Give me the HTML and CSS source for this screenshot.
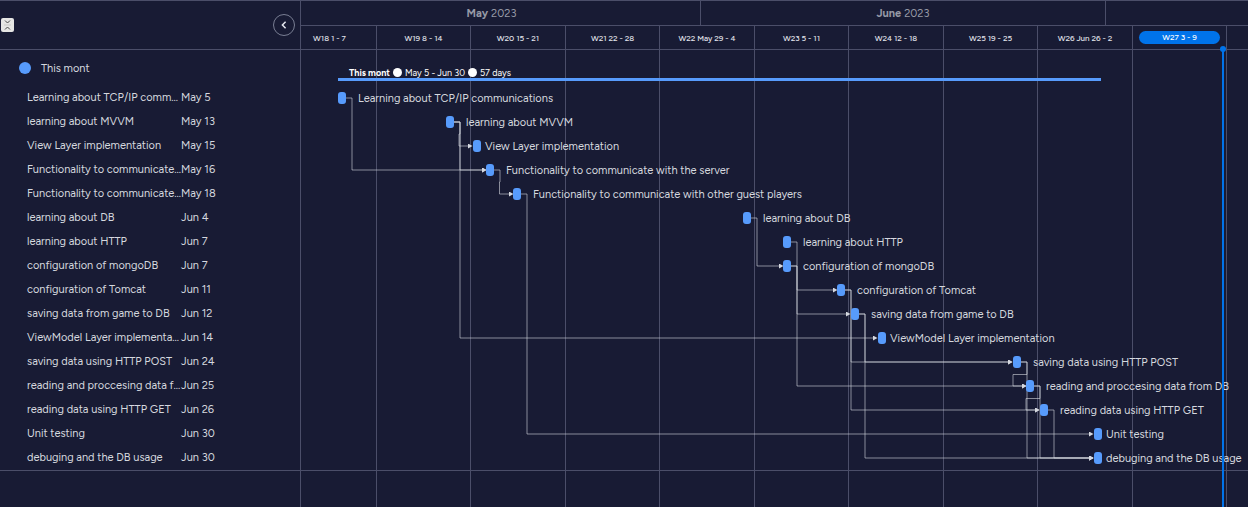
FILE: index.html
```html
<!DOCTYPE html>
<html lang="en">
<head>
<meta charset="utf-8">
<title>Gantt</title>
<link rel="stylesheet" href="styles.css">
</head>
<body>
<main class="gantt">
  <aside class="sidebar">
    <header class="sidebar-head">
      <button class="fold" type="button" aria-label="Collapse all groups">
        <svg width="13" height="14" viewBox="0 0 13 14"><path d="M4 2.500l2.500 2.500L9 2.500M4 11.500l2.500-2.500L9 11.500" fill="none" stroke="#4a4a48" stroke-width="1"/><path d="M3 7h7" stroke="#c9c9c6" stroke-width="1"/></svg>
      </button>
      <button class="hide" type="button" aria-label="Hide list">
        <svg width="10" height="10" viewBox="0 0 10 10"><path d="M6.600 1.800L3.400 5l3.200 3.200" fill="none" stroke="#e4e6ee" stroke-width="1.500"/></svg>
      </button>
    </header>
    <h2 class="group"><span class="group-dot"></span>This mont</h2>
    <table class="tasks">
      <tbody>
        <tr><td class="name">Learning about TCP/IP comm…</td><td>May 5</td></tr>
        <tr><td class="name">learning about MVVM</td><td>May 13</td></tr>
        <tr><td class="name">View Layer implementation</td><td>May 15</td></tr>
        <tr><td class="name">Functionality to communicate…</td><td>May 16</td></tr>
        <tr><td class="name">Functionality to communicate…</td><td>May 18</td></tr>
        <tr><td class="name">learning about DB</td><td>Jun 4</td></tr>
        <tr><td class="name">learning about HTTP</td><td>Jun 7</td></tr>
        <tr><td class="name">configuration of mongoDB</td><td>Jun 7</td></tr>
        <tr><td class="name">configuration of Tomcat</td><td>Jun 11</td></tr>
        <tr><td class="name">saving data from game to DB</td><td>Jun 12</td></tr>
        <tr><td class="name">ViewModel Layer implementa…</td><td>Jun 14</td></tr>
        <tr><td class="name">saving data using HTTP POST</td><td>Jun 24</td></tr>
        <tr><td class="name">reading and proccesing data f…</td><td>Jun 25</td></tr>
        <tr><td class="name">reading data using HTTP GET</td><td>Jun 26</td></tr>
        <tr><td class="name">Unit testing</td><td>Jun 30</td></tr>
        <tr><td class="name">debuging and the DB usage</td><td>Jun 30</td></tr>
      </tbody>
    </table>
    <div class="rest"></div>
  </aside>

  <section class="chart">
    <div class="track">
      <div class="months">
        <div class="month"><b>May</b> 2023</div>
        <div class="month"><b>June</b> 2023</div>
        <div class="month"></div>
      </div>
      <div class="weeks">
        <div class="week">W18 1 - 7</div>
        <div class="week">W19 8 - 14</div>
        <div class="week">W20 15 - 21</div>
        <div class="week">W21 22 - 28</div>
        <div class="week">W22 May 29 - 4</div>
        <div class="week">W23 5 - 11</div>
        <div class="week">W24 12 - 18</div>
        <div class="week">W25 19 - 25</div>
        <div class="week">W26 Jun 26 - 2</div>
        <div class="week"><span class="current">W27 3 - 9</span></div>
        <div class="week"></div>
      </div>
      <div class="body">
        <div class="gridlines"><i></i><i></i><i></i><i></i><i></i><i></i><i></i><i></i><i></i><i></i><i></i></div>
        <svg class="links" width="1039" height="420" viewBox="283 50 1039 420">
          <defs>
            <marker id="tip" markerUnits="userSpaceOnUse" markerWidth="5" markerHeight="5" refX="0" refY="2.500"><path d="M0 0L4.500 2.500L0 5z" fill="#d5d8df"/></marker>
          </defs>
          <g fill="none" stroke="#d5d8df" stroke-opacity=".6" stroke-width="1">
            <path d="M346 98H352V170H482" marker-end="url(#tip)"/>
            <path d="M454 122H460V134H459V146H468" marker-end="url(#tip)"/>
            <path d="M454 122H460V170H482" marker-end="url(#tip)"/>
            <path d="M454 122H460V338H873" marker-end="url(#tip)"/>
            <path d="M494 170H500V182H499.500V194H509" marker-end="url(#tip)"/>
            <path d="M521 194H527V434H1089" marker-end="url(#tip)"/>
            <path d="M751 218H757V266H779" marker-end="url(#tip)"/>
            <path d="M791 242H797V386H1022" marker-end="url(#tip)"/>
            <path d="M791 266H797V290H833" marker-end="url(#tip)"/>
            <path d="M791 266H797V314H846" marker-end="url(#tip)"/>
            <path d="M845 290H851V362H1008" marker-end="url(#tip)"/>
            <path d="M845 290H851V410H1035" marker-end="url(#tip)"/>
            <path d="M859 314H865V362H1008" marker-end="url(#tip)"/>
            <path d="M859 314H865V458H1089" marker-end="url(#tip)"/>
            <path d="M1021 362H1027V374.500H1013V386H1022" marker-end="url(#tip)"/>
            <path d="M1021 362H1027V458H1089" marker-end="url(#tip)"/>
            <path d="M1034 386H1040V398.500H1026V410H1035" marker-end="url(#tip)"/>
            <path d="M1034 386H1040V458H1089" marker-end="url(#tip)"/>
            <path d="M1048 410H1054V458H1089" marker-end="url(#tip)"/>
          </g>
        </svg>
        <div class="summary" style="margin-left:55px;width:763px"><b>This mont</b><span class="sep"></span>May 5 - Jun 30<span class="sep"></span>57 days</div>
        <ul class="rows">
          <li class="row linked" style="padding-left:55px"><span class="bar"></span>Learning about TCP/IP communications</li>
          <li class="row linked" style="padding-left:163px"><span class="bar"></span>learning about MVVM</li>
          <li class="row" style="padding-left:190px"><span class="bar"></span>View Layer implementation</li>
          <li class="row linked" style="padding-left:203px"><span class="bar"></span>Functionality to communicate with the server</li>
          <li class="row linked" style="padding-left:230px"><span class="bar"></span>Functionality to communicate with other guest players</li>
          <li class="row linked" style="padding-left:460px"><span class="bar"></span>learning about DB</li>
          <li class="row linked" style="padding-left:500px"><span class="bar"></span>learning about HTTP</li>
          <li class="row linked" style="padding-left:500px"><span class="bar"></span>configuration of mongoDB</li>
          <li class="row linked" style="padding-left:554px"><span class="bar"></span>configuration of Tomcat</li>
          <li class="row linked" style="padding-left:568px"><span class="bar"></span>saving data from game to DB</li>
          <li class="row" style="padding-left:595px"><span class="bar"></span>ViewModel Layer implementation</li>
          <li class="row linked" style="padding-left:730px"><span class="bar"></span>saving data using HTTP POST</li>
          <li class="row linked" style="padding-left:743px"><span class="bar"></span>reading and proccesing data from DB</li>
          <li class="row linked" style="padding-left:757px"><span class="bar"></span>reading data using HTTP GET</li>
          <li class="row" style="padding-left:811px"><span class="bar"></span>Unit testing</li>
          <li class="row" style="padding-left:811px"><span class="bar"></span>debuging and the DB usage</li>
        </ul>
        <div class="rest"></div>
        <div class="today" style="left:939px"></div>
      </div>
    </div>
  </section>
</main>
</body>
</html>
```
FILE: styles.css
```css
:root {
  --bg: #181b34;
  --line: #4b4e69;
  --text: #d5d8df;
  --bar: #579bfc;
  --primary: #0073ea;
}

* { box-sizing: border-box; }

body {
  margin: 0;
  background: var(--bg);
  color: var(--text);
  font-family: Figtree, Lato, sans-serif;
  font-size: 11px;
}

.gantt {
  display: flex;
  min-height: 100vh;
  border-top: 1px solid var(--line);
  overflow: hidden;
}

.sidebar {
  display: flex;
  flex-direction: column;
  flex: 0 0 301px;
  border-right: 1px solid var(--line);
}

.sidebar-head {
  display: flex;
  align-items: center;
  justify-content: space-between;
  height: 49px;
  padding: 0 5px 0 1px;
  border-bottom: 1px solid var(--line);
}

.fold,
.hide {
  display: grid;
  place-items: center;
  padding: 0;
  border: 0;
}

.fold {
  width: 13px;
  height: 14px;
  border-radius: 2px;
  background: #e6e6e4;
}

.hide {
  width: 22px;
  height: 22px;
  border: 1px solid #797e93;
  border-radius: 50%;
  background: var(--bg);
}

.group {
  display: flex;
  align-items: center;
  gap: 10px;
  height: 36px;
  margin: 0;
  padding-left: 19px;
  font-size: 11px;
  font-weight: 400;
}

.group-dot {
  width: 12px;
  height: 12px;
  border-radius: 50%;
  background: var(--bar);
}

.tasks {
  width: 100%;
  table-layout: fixed;
  border-collapse: collapse;
}

.tasks td {
  height: 24px;
  padding: 0;
  line-height: 24px;
  white-space: nowrap;
}

.tasks .name {
  width: 181px;
  padding-left: 27px;
}

.rest {
  flex: 1;
  border-top: 1px solid var(--line);
}

.chart {
  display: flex;
  flex: 1;
  min-width: 0;
  overflow: hidden;
}

.track {
  display: flex;
  flex-direction: column;
  flex: 1 0 1039px;
  margin-left: -18px;
}

.months,
.weeks {
  display: grid;
  border-bottom: 1px solid var(--line);
}

.months {
  grid-template-columns: 418px 405px 1fr;
  height: 25px;
  color: #9699a6;
}

.weeks,
.gridlines {
  grid-template-columns: 94px repeat(5, 94px 95px);
}

.weeks {
  height: 24px;
  font-size: 8px;
  font-weight: 500;
  color: #e4e6ee;
}

.month,
.week {
  display: flex;
  align-items: center;
  justify-content: center;
  gap: 3px;
  border-right: 1px solid var(--line);
}

.current {
  flex: 1;
  margin: 0 6px;
  border-radius: 8px;
  background: var(--primary);
  color: #fff;
  line-height: 13px;
  text-align: center;
}

.body {
  position: relative;
  display: flex;
  flex: 1;
  flex-direction: column;
}

.gridlines {
  position: absolute;
  inset: 0;
  display: grid;
}

.gridlines i { border-right: 1px solid var(--line); }

.links {
  position: absolute;
  top: 0;
  left: 0;
}

.summary {
  display: flex;
  align-items: center;
  position: relative;
  height: 31px;
  margin-bottom: 5px;
  padding: 16px 0 0 11px;
  border-bottom: 3px solid var(--bar);
  font-size: 9px;
  color: #fff;
}

.sep {
  width: 9px;
  height: 9px;
  margin: 0 3px;
  border-radius: 50%;
  background: #fff;
}

.rows {
  position: relative;
  margin: 0;
  padding: 0;
  list-style: none;
}

.row {
  display: flex;
  align-items: center;
  gap: 4px;
  height: 24px;
  white-space: nowrap;
}

.row.linked { gap: 12px; }

.bar {
  width: 8px;
  height: 12px;
  border-radius: 3px;
  background: var(--bar);
}

.today {
  position: absolute;
  top: 0;
  bottom: 0;
  width: 2px;
  background: var(--primary);
}

.today::before {
  content: "";
  position: absolute;
  top: -4px;
  left: -2px;
  width: 6px;
  height: 6px;
  border-radius: 50%;
  background: var(--primary);
}
```
